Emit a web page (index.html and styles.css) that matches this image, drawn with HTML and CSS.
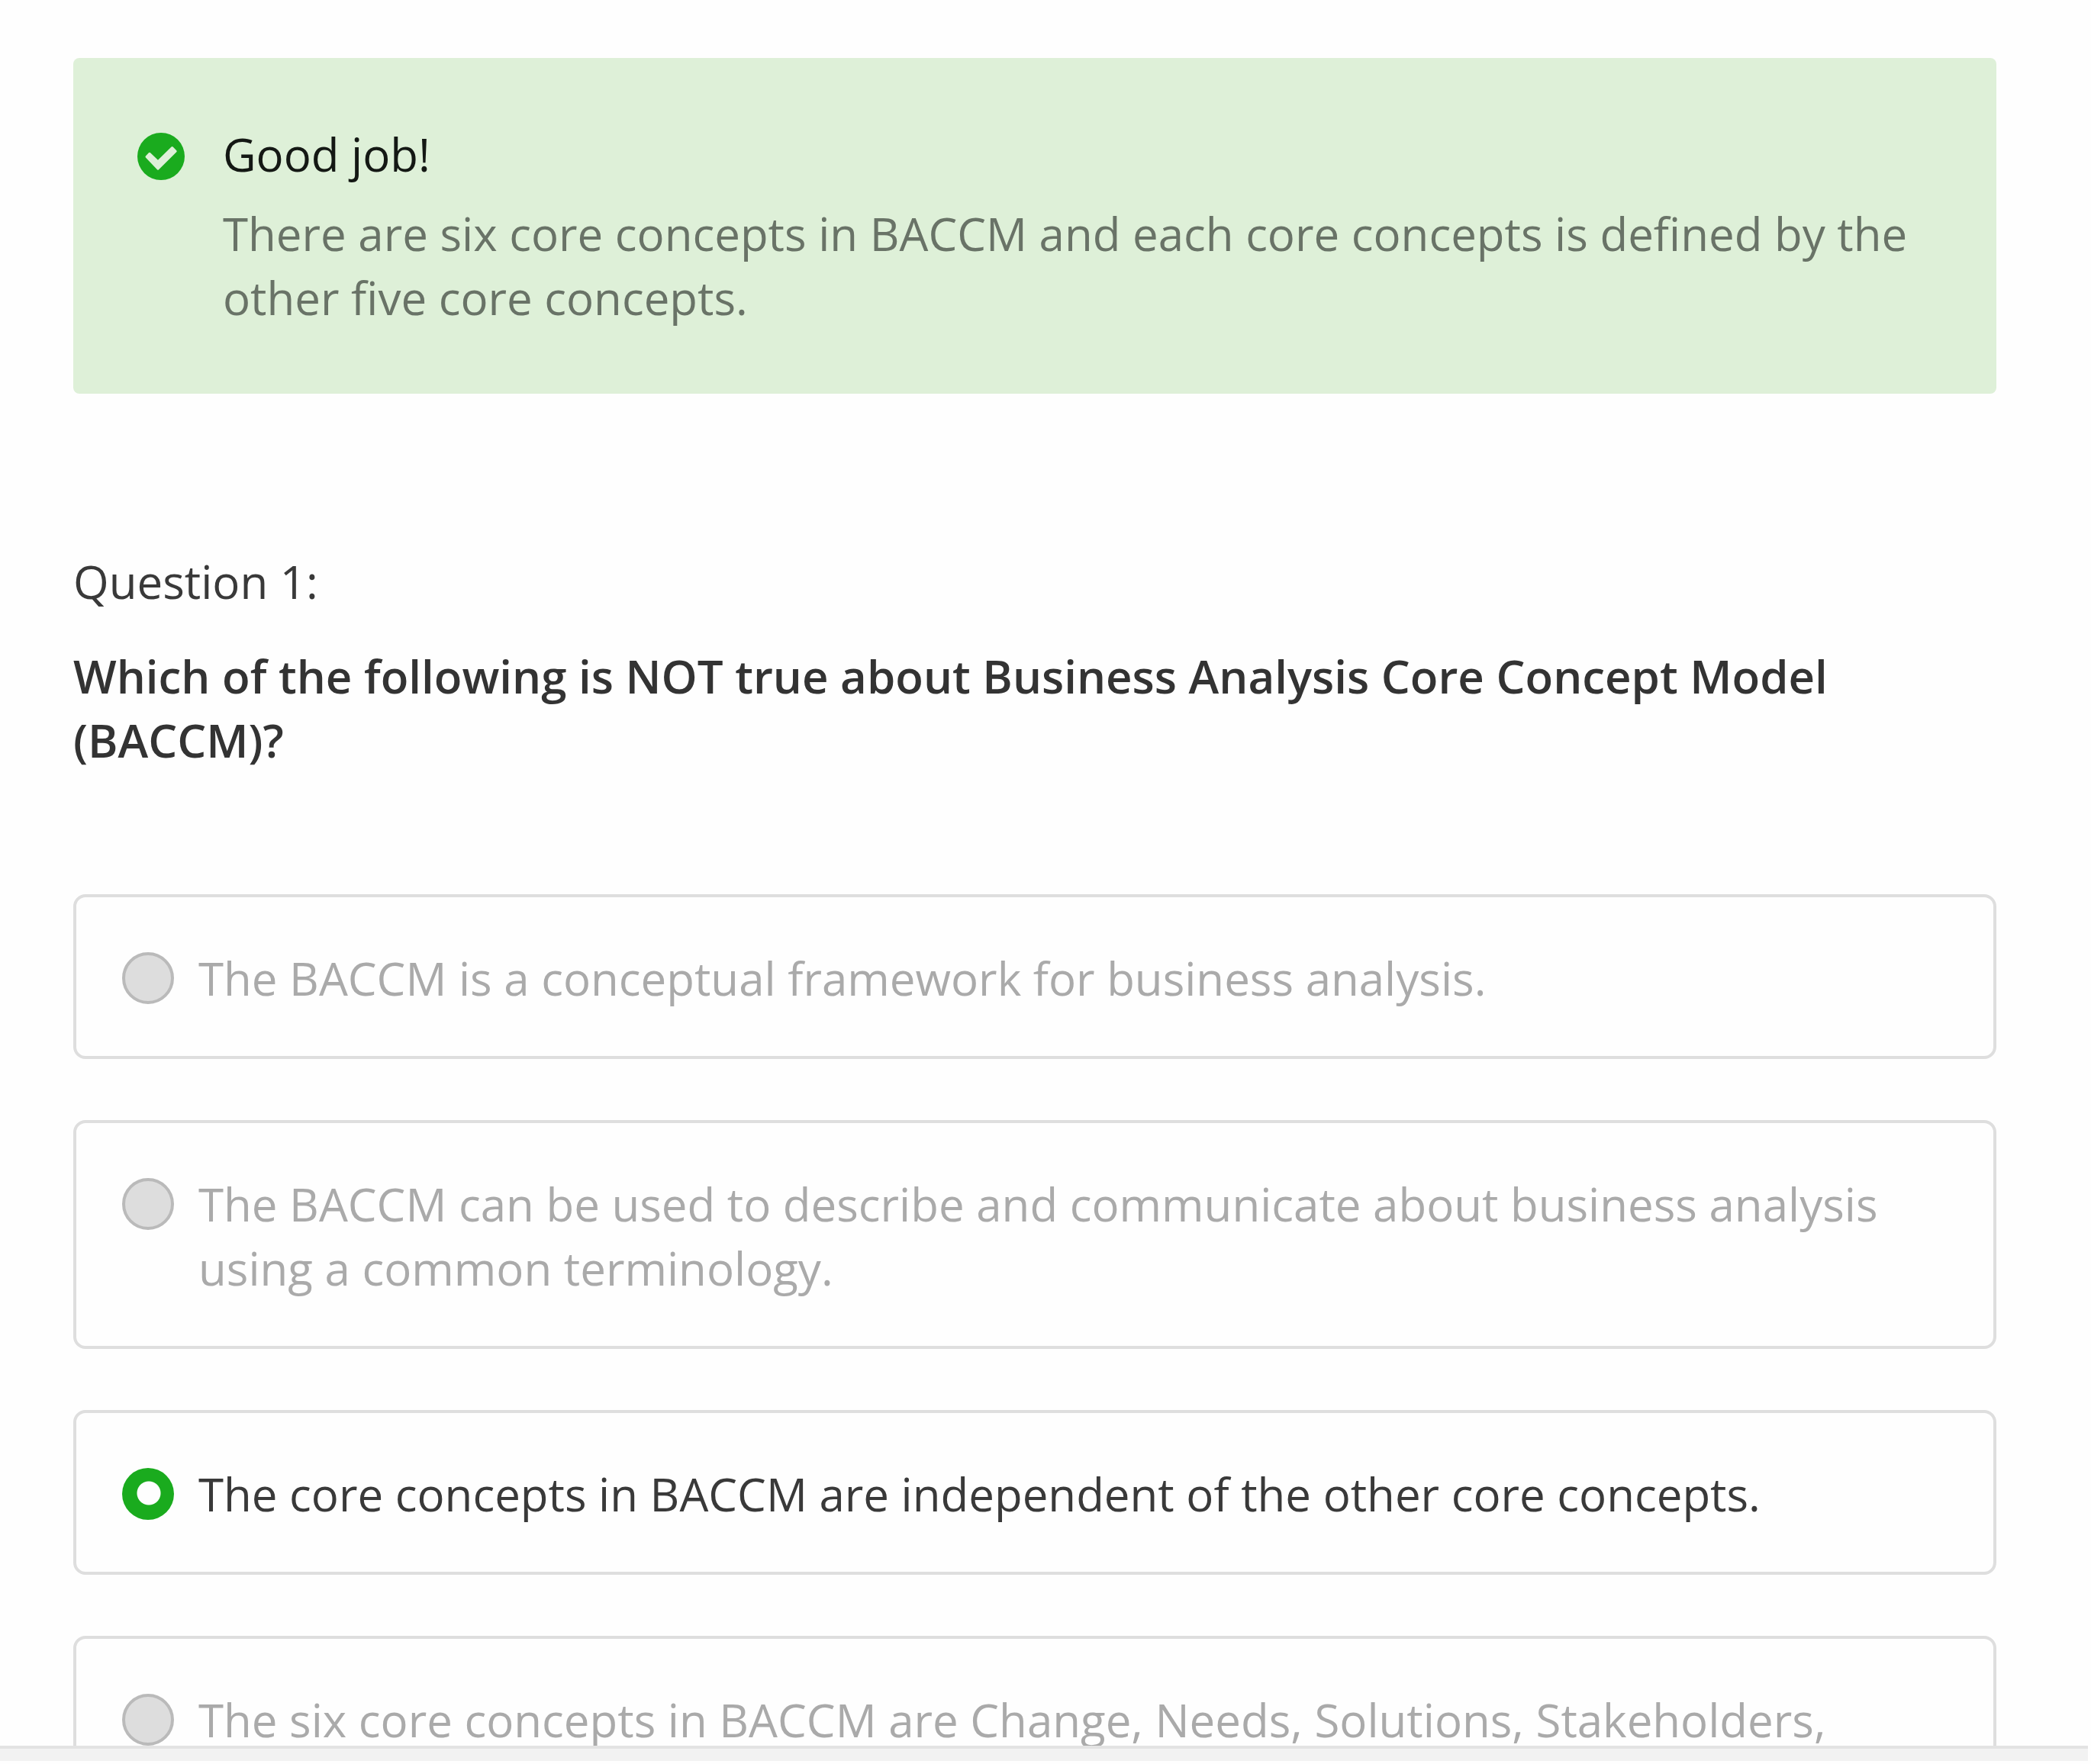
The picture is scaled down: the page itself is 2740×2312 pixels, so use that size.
FILE: index.html
```
<!DOCTYPE html>
<html lang="en">
<head>
<meta charset="utf-8">
<title>Practice quiz</title>
<link rel="stylesheet" href="styles.css">
</head>
<body>
<main class="quiz">
  <section class="feedback" role="status">
    <svg class="feedback-icon" viewBox="0 0 62 62" aria-hidden="true">
      <circle class="icon-disc" cx="31" cy="31" r="31"/>
      <path class="icon-check" d="M12 31.5 L16 27.3 L27 37.8 L45.6 19.6 L50.2 24.3 L27 47.2 Z"/>
    </svg>
    <div class="feedback-body">
      <h2 class="feedback-title">Good job!</h2>
      <p class="feedback-text">There are six core concepts in BACCM and each core concepts is defined by the other five core concepts.</p>
    </div>
  </section>

  <form class="question">
    <p class="question-number">Question 1:</p>
    <h1 class="question-prompt" id="prompt">Which of the following is NOT true about Business Analysis Core Concept Model (BACCM)?</h1>
    <div class="answers" role="radiogroup" aria-labelledby="prompt">
      <label class="answer answer-disabled">
        <input class="answer-radio" type="radio" name="answer" disabled>
        <span class="answer-text">The BACCM is a conceptual framework for business analysis.</span>
      </label>
      <label class="answer answer-disabled">
        <input class="answer-radio" type="radio" name="answer" disabled>
        <span class="answer-text">The BACCM can be used to describe and communicate about business analysis using a common terminology.</span>
      </label>
      <label class="answer">
        <input class="answer-radio" type="radio" name="answer" checked>
        <span class="answer-text">The core concepts in BACCM are independent of the other core concepts.</span>
      </label>
      <label class="answer answer-disabled">
        <input class="answer-radio" type="radio" name="answer" disabled>
        <span class="answer-text">The six core concepts in BACCM are Change, Needs, Solutions, Stakeholders,</span>
      </label>
    </div>
  </form>
</main>
<footer class="bottom-bar"></footer>
</body>
</html>
```
FILE: styles.css
```
* {
  box-sizing: border-box;
}

body {
  display: flex;
  flex-direction: column;
  height: 100vh;
  margin: 0;
  padding: 0 4px 4px 0;
  overflow: hidden;
  background: #fefefe;
  color: #393939;
  font-family: "Open Sans", "Noto Sans", sans-serif;
  font-size: 60px;
  line-height: 84px;
}

h1,
h2,
p {
  margin: 0;
  font-size: inherit;
  font-weight: 400;
}

.quiz {
  flex: 1;
  min-height: 0;
  padding: 76px 120px 0 96px;
  overflow: hidden;
}

/* Result banner */
.feedback {
  display: flex;
  align-items: flex-start;
  gap: 50px;
  padding: 84px;
  border-radius: 8px;
  background: #def0d8;
}

.feedback-icon {
  flex: none;
  width: 62px;
  height: 62px;
  margin-top: 14px;
}

.icon-disc {
  fill: #1aab1e;
}

.icon-check {
  fill: #def0d8;
  stroke: #def0d8;
  stroke-width: 3;
  stroke-linejoin: round;
}

.feedback-body {
  display: flex;
  flex-direction: column;
  gap: 20px;
}

.feedback-title {
  color: #141814;
}

.feedback-text {
  color: #697367;
}

/* Question */
.question {
  margin-top: 204px;
}

.question-prompt {
  margin-top: 40px;
  color: #333;
  font-weight: 600;
}

.answers {
  display: flex;
  flex-direction: column;
  gap: 80px;
  margin-top: 160px;
}

.answer {
  display: flex;
  align-items: flex-start;
  gap: 32px;
  padding: 64px 60px 60px;
  border: 4px solid #dedede;
  border-radius: 16px;
}

.answer-disabled {
  color: #aaa;
}

.answer-radio {
  flex: none;
  appearance: none;
  width: 68px;
  height: 68px;
  margin: 8px 0 0;
  border: 4px solid #bababa;
  border-radius: 50%;
  background: #ddd;
}

.answer-radio:checked {
  border: 0;
  background: radial-gradient(circle at 35px 33px, #fefefe 15px, #1aab1e 16px);
}

/* Strip along the bottom edge */
.bottom-bar {
  flex: none;
  height: 20px;
  border-top: 4px solid #e3e3e3;
  background: #f2f2f2;
}
```
